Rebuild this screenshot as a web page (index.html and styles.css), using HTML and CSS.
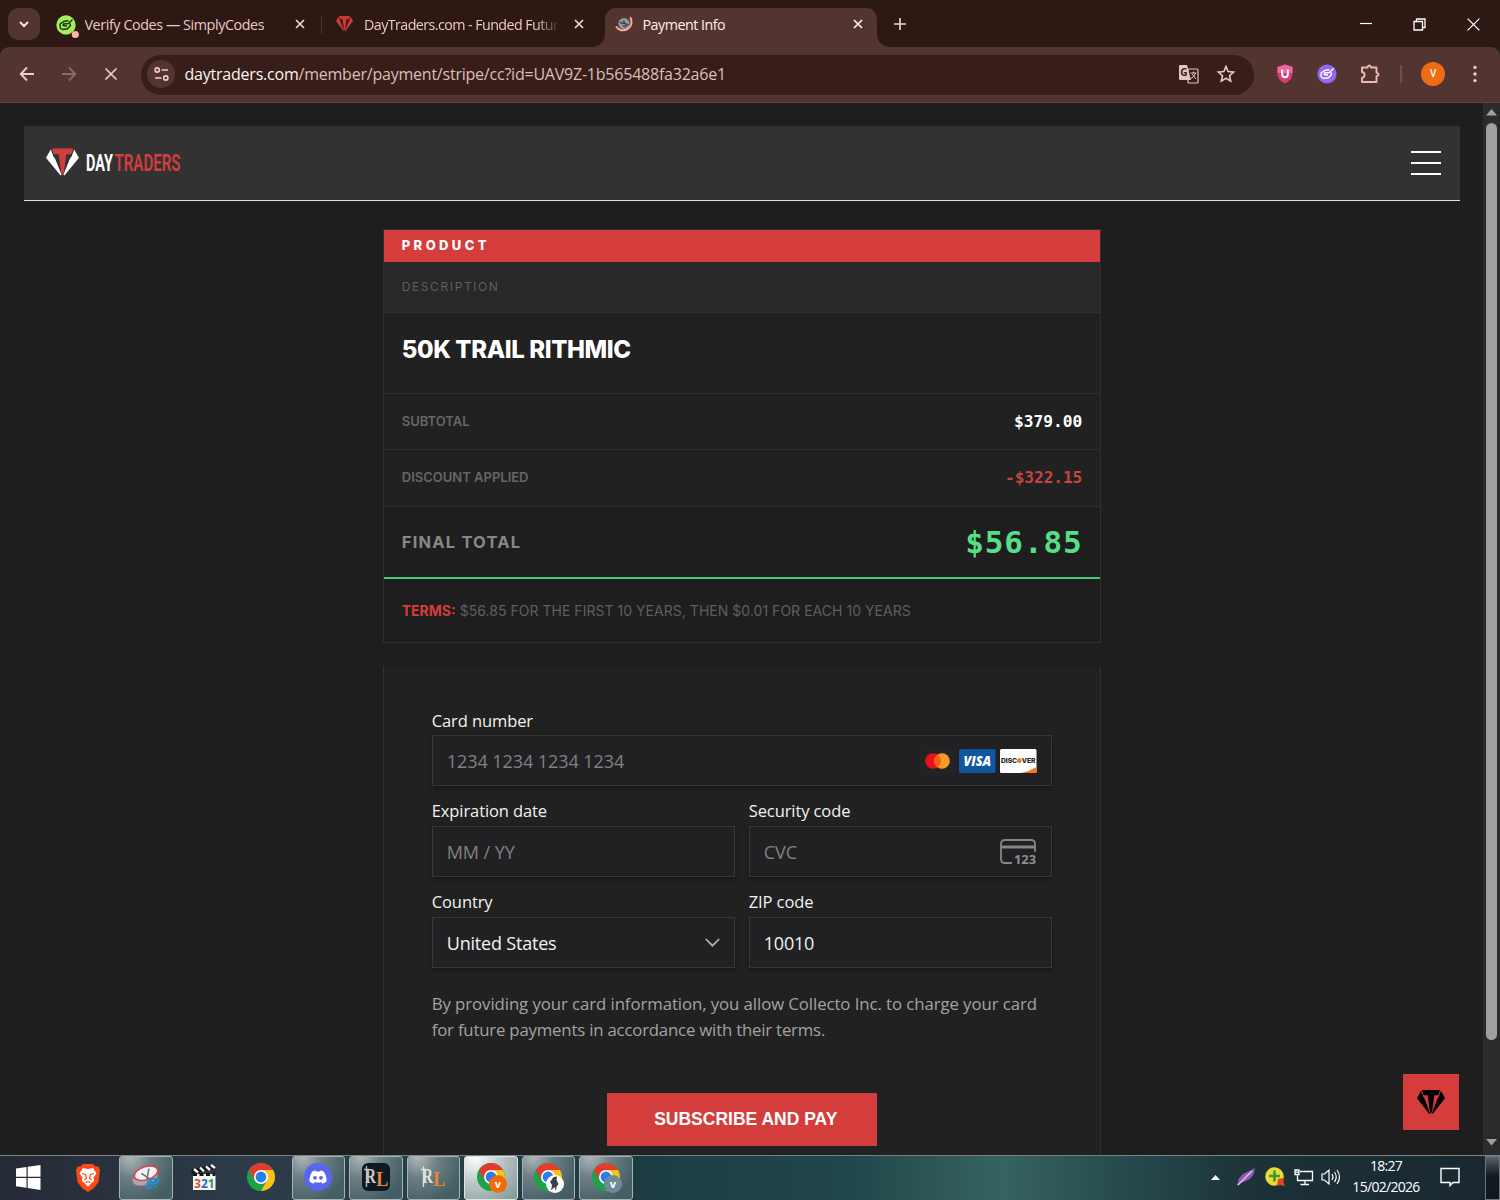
FILE: index.html
```html
<!DOCTYPE html>
<html lang="en">

<head>
  <meta charset="UTF-8">
  <meta name="viewport" content="width=device-width, initial-scale=1.0">
  <title>Payment Info</title>
  <link rel="stylesheet" href="styles.css">
</head>

<body>
  <!-- shared shapes -->
  <svg class="defs" width="0" height="0">
    <defs>
      <symbol id="gem" viewBox="0 0 34 28">
        <path class="gem-side" d="M5 1 L0 9.5 L15 28 L16 27 L9.5 11 L7.5 8 Z M29 1 L34 9.5 L19 28 L18 27 L24.5 11 L26.5 8 Z" />
        <path class="gem-core" d="M6 0 H28 L26 6 H21 L18.5 24 L17 28 L15.5 24 L13 6 H8 Z" />
      </symbol>
      <symbol id="chrome" viewBox="0 0 28 28">
        <circle cx="14" cy="14" r="14" fill="#1fa04b" />
        <path d="M1.9 7 A14 14 0 0 1 26.1 7 L14 7 L8 17.5 Z" fill="#e33b2e" />
        <path d="M26.1 7 A14 14 0 0 1 14 28 L20 17.5 L14 7 Z" fill="#fbc116" />
        <circle cx="14" cy="14" r="7" fill="#fff" />
        <circle cx="14" cy="14" r="5.4" fill="#2b7de9" />
      </symbol>
      <symbol id="tag" viewBox="0 0 20 20">
        <path d="M12.5 5.8 L8.5 6.2 L4 9 L4.2 13 L6.5 14.5 L11.5 13.8 L14.5 10.5 L14 8.5 M16.5 4.5 L12.5 8.5 L7.5 9 L7 10.5 L11 11" fill="none" stroke="currentColor" stroke-width="1.4" stroke-linejoin="round" />
      </symbol>
    </defs>
  </svg>

  <div class="window">
    <div class="tab-strip">
      <button class="tab-search">
        <svg width="12" height="8" viewBox="0 0 12 8"><path d="M2 2 L6 6 L10 2" fill="none" stroke="#ffe4df" stroke-width="2" /></svg>
      </button>
      <div class="tab tab-one">
        <svg class="favicon" width="24" height="24" viewBox="0 0 24 24">
          <circle cx="10" cy="11" r="9.7" fill="#a3ee5d" />
          <use href="#tag" x="0" y="1" width="20" height="20" color="#16340d" />
          <circle cx="19.3" cy="20.5" r="3.6" fill="#ffb3a6" />
        </svg>
        <span class="tab-title">Verify Codes — SimplyCodes</span>
        <svg class="tab-close" width="10" height="10" viewBox="0 0 10 10"><path d="M1 1 L9 9 M9 1 L1 9" stroke="#f6d5cf" stroke-width="1.7" /></svg>
      </div>
      <div class="tab tab-two">
        <svg class="favicon gem-dark" width="17" height="15" viewBox="0 0 34 28" preserveAspectRatio="none"><use href="#gem" width="34" height="28" /></svg>
        <span class="tab-title fade">DayTraders.com - Funded Futures</span>
        <svg class="tab-close" width="10" height="10" viewBox="0 0 10 10"><path d="M1 1 L9 9 M9 1 L1 9" stroke="#f6d5cf" stroke-width="1.7" /></svg>
      </div>
      <div class="tab tab-active">
        <svg class="favicon" width="18" height="18" viewBox="0 0 18 18">
          <circle cx="9" cy="7.5" r="5.6" fill="#8d999e" />
          <path d="M5 6 Q7 8 9.5 7 L8.5 4.5 M9.5 7.5 L12.5 8.5 L10.5 10.5 L8 10" fill="none" stroke="#46464b" stroke-width="1.6" />
          <path d="M15.2 1.2 A8 8 0 1 1 1 10.5" fill="none" stroke="#ffa99f" stroke-width="2" />
        </svg>
        <span class="tab-title">Payment Info</span>
        <svg class="tab-close" width="10" height="10" viewBox="0 0 10 10"><path d="M1 1 L9 9 M9 1 L1 9" stroke="#fff0ed" stroke-width="1.7" /></svg>
      </div>
      <button class="new-tab">
        <svg width="12" height="12" viewBox="0 0 12 12"><path d="M6 0 V12 M0 6 H12" stroke="#f3cdc7" stroke-width="1.7" /></svg>
      </button>
      <div class="window-controls">
        <svg width="12" height="12" viewBox="0 0 12 12"><path d="M0 5.5 H12" stroke="#fff" stroke-width="1.2" /></svg>
        <svg width="13" height="13" viewBox="0 0 13 13"><path d="M1 3.5 H9.5 V12 H1 Z M3.5 3.5 V1 H12 V9.5 H9.5" fill="none" stroke="#fff" stroke-width="1.3" /></svg>
        <svg width="13" height="13" viewBox="0 0 13 13"><path d="M.6 .6 L12.4 12.4 M12.4 .6 L.6 12.4" stroke="#fff" stroke-width="1.3" /></svg>
      </div>
    </div>

    <div class="toolbar">
      <div class="nav-buttons">
        <svg width="16" height="16" viewBox="0 0 16 16"><path d="M15 8 H2 M8 1.5 L1.7 8 L8 14.5" fill="none" stroke="#f3cdc7" stroke-width="1.8" /></svg>
        <svg width="16" height="16" viewBox="0 0 16 16"><path d="M1 8 H14 M8 1.5 L14.3 8 L8 14.5" fill="none" stroke="#8c6a66" stroke-width="1.8" /></svg>
        <svg width="16" height="16" viewBox="0 0 16 16"><path d="M2.5 2.5 L13.5 13.5 M13.5 2.5 L2.5 13.5" stroke="#f3cdc7" stroke-width="1.7" /></svg>
      </div>
      <div class="address-bar">
        <span class="site-info">
          <svg width="15" height="14" viewBox="0 0 15 14"><path d="M7.5 3 H14 M1 11 H7.5" stroke="#f3cdc7" stroke-width="1.6" /><circle cx="3.2" cy="3" r="2.1" fill="none" stroke="#f3cdc7" stroke-width="1.6" /><circle cx="11.8" cy="11" r="2.1" fill="none" stroke="#f3cdc7" stroke-width="1.6" /></svg>
        </span>
        <span class="url"><b>daytraders.com</b>/member/payment/stripe/cc?id=UAV9Z-1b565488fa32a6e1</span>
        <svg class="translate" width="20" height="19" viewBox="0 0 20 19">
          <rect x="9" y="4" width="10" height="14" rx="1" fill="none" stroke="#e5c5c0" stroke-width="1.2" />
          <path d="M1.2 0 H8 L12 15 H1.2 Q0 15 0 13.8 V1.2 Q0 0 1.2 0 Z" fill="#e5c5c0" />
          <path d="M11.5 8 H17.5 M14.5 6.5 V8 M16.5 8 Q15.5 12 12 13.5 M13 9 L17 14" fill="none" stroke="#e5c5c0" />
          <text x="1.2" y="11" class="icon-g">G</text>
        </svg>
        <svg width="18" height="18" viewBox="0 0 18 18"><path d="M9 1.6 L11.2 6.6 L16.6 7.1 L12.5 10.7 L13.7 16.1 L9 13.2 L4.3 16.1 L5.5 10.7 L1.4 7.1 L6.8 6.6 Z" fill="none" stroke="#ecc9c3" stroke-width="1.6" /></svg>
      </div>
      <div class="extensions">
        <svg width="16" height="20" viewBox="0 0 16 20">
          <path d="M8 .5 L15.5 3 V11 Q14.5 16.5 8 19.5 Q1.5 16.5 .5 11 V3 Z" fill="#d63c72" />
          <path d="M8 .5 L15.5 3 V9 H.5 V3 Z" fill="#f0669b" />
          <path d="M5.2 5.5 V10.5 Q5.2 13.2 8 13.2 Q10.8 13.2 10.8 10.5 V5.5" fill="none" stroke="#fff" stroke-width="2" />
        </svg>
        <svg width="20" height="20" viewBox="0 0 20 20"><circle cx="10" cy="10" r="9.6" fill="#9367f3" /><use href="#tag" width="20" height="20" color="#fff" /></svg>
        <svg width="20" height="20" viewBox="0 0 20 20"><path d="M2 3.5 H7.5 Q7.8 1.5 9.2 1.5 Q10.6 1.5 11 3.5 H16.5 V8.8 Q18.5 9.2 18.5 10.5 Q18.5 11.8 16.5 12.2 V18 H2 V14 Q4.6 13.3 4.6 11 Q4.6 8.7 2 8 Z" fill="none" stroke="#efb9b2" stroke-width="1.9" stroke-linejoin="round" /></svg>
        <i class="divider"></i>
        <span class="avatar">V</span>
        <svg width="4" height="18" viewBox="0 0 4 18"><circle cx="2" cy="2.4" r="1.7" fill="#f3cdc7" /><circle cx="2" cy="9" r="1.7" fill="#f3cdc7" /><circle cx="2" cy="15.6" r="1.7" fill="#f3cdc7" /></svg>
      </div>
    </div>

    <div class="viewport">
      <main class="page">
        <header class="site-header">
          <svg class="logo" width="150" height="32" viewBox="0 0 150 32">
            <use href="#gem" x="0" y="1" width="33" height="28" />
            <text x="40" y="24" class="logo-day" textLength="27" lengthAdjust="spacingAndGlyphs">DAY</text>
            <text x="68.5" y="24" class="logo-traders" textLength="66" lengthAdjust="spacingAndGlyphs">TRADERS</text>
          </svg>
          <div class="menu-toggle"><i></i><i></i><i></i></div>
        </header>

        <section class="summary">
          <div class="row row-product">Product</div>
          <div class="row row-description">Description</div>
          <div class="row row-name">50K TRAIL RITHMIC</div>
          <div class="row row-line"><span>Subtotal</span><b>$379.00</b></div>
          <div class="row row-line"><span>Discount applied</span><b class="discount">-$322.15</b></div>
          <div class="row row-total"><span>Final total</span><b>$56.85</b></div>
          <div class="row row-terms"><strong>Terms:</strong>&nbsp;<span>$56.85 for the first 10 years, then $0.01 for each 10 years</span></div>
        </section>

        <form class="payment">
          <div class="field wide">
            <label>Card number</label>
            <div class="input placeholder">
              <span>1234 1234 1234 1234</span>
              <svg class="brands" width="118" height="26" viewBox="0 0 118 26">
                <rect x="2" y="1" width="36" height="24" rx="1.5" fill="#242324" />
                <circle cx="14" cy="13" r="7.8" fill="#e8101c" />
                <circle cx="23" cy="13" r="7.8" fill="#f79a2b" />
                <path d="M18.5 6.6 A7.8 7.8 0 0 1 18.5 19.4 A7.8 7.8 0 0 1 18.5 6.6 Z" fill="#ff5d0e" />
                <rect x="40" y="1" width="36.5" height="24" rx="1.5" fill="#10569f" />
                <text x="44.5" y="17.5" class="visa" textLength="27.5" lengthAdjust="spacingAndGlyphs">VISA</text>
                <rect x="81" y="1" width="36.5" height="24" rx="1.5" fill="#fff" />
                <path d="M117.5 19 V25 H102 Q111 23 117.5 19 Z" fill="#f4791f" />
                <text x="82" y="15" class="discover" textLength="16" lengthAdjust="spacingAndGlyphs">DISC</text>
                <circle cx="100.3" cy="12.7" r="2.4" fill="#f4791f" />
                <text x="102.8" y="15" class="discover" textLength="13.5" lengthAdjust="spacingAndGlyphs">VER</text>
              </svg>
            </div>
          </div>
          <div class="field">
            <label>Expiration date</label>
            <div class="input placeholder"><span>MM / YY</span></div>
          </div>
          <div class="field">
            <label>Security code</label>
            <div class="input placeholder">
              <span>CVC</span>
              <svg width="37" height="26" viewBox="0 0 37 26">
                <path d="M12 24 H5 Q1 24 1 20 V5 Q1 1 5 1 H31 Q35 1 35 5 V13" fill="none" stroke="#858586" stroke-width="1.8" />
                <path d="M1 8 H35" stroke="#858586" stroke-width="3.2" />
                <text x="14" y="24.5" class="cvc-digits" textLength="22" lengthAdjust="spacingAndGlyphs">123</text>
              </svg>
            </div>
          </div>
          <div class="field">
            <label>Country</label>
            <div class="input">
              <span>United States</span>
              <svg width="15" height="9" viewBox="0 0 15 9"><path d="M.8 1 L7.5 7.7 L14.2 1" fill="none" stroke="#b4b4b5" stroke-width="1.7" /></svg>
            </div>
          </div>
          <div class="field">
            <label>ZIP code</label>
            <div class="input"><span>10010</span></div>
          </div>
          <p class="mandate">By providing your card information, you allow Collecto Inc. to charge your card<br><span>for future payments in accordance with their terms.</span></p>
          <button class="submit" type="button">SUBSCRIBE AND PAY</button>
        </form>
      </main>

      <div class="scrollbar">
        <svg width="11" height="7" viewBox="0 0 11 7"><path d="M5.5 0 L11 6.5 H0 Z" fill="#a0a0a0" /></svg>
        <i class="thumb"></i>
        <svg width="11" height="7" viewBox="0 0 11 7"><path d="M5.5 6.5 L11 0 H0 Z" fill="#a0a0a0" /></svg>
      </div>

      <div class="chat-launcher">
        <svg class="gem-black" width="28" height="24" viewBox="0 0 34 28" preserveAspectRatio="none"><use href="#gem" width="34" height="28" /></svg>
      </div>
    </div>
  </div>

  <footer class="taskbar">
    <div class="start">
      <svg width="25" height="25" viewBox="0 0 25 25"><path d="M0 3.5 L10.5 2 V11.8 H0 Z M11.7 1.8 L24.5 0 V11.8 H11.7 Z M0 13 H10.5 V22.8 L0 21.3 Z M11.7 13 H24.5 V25 L11.7 23 Z" fill="#fff" /></svg>
    </div>
    <div class="slot">
      <svg width="24" height="29" viewBox="0 0 24 29">
        <path d="M7 1 H17 L19.5 3.5 L22 3.2 L24 7 L22.5 19 L18 25 L12 29 L6 25 L1.5 19 L0 7 L2 3.2 L4.5 3.5 Z" fill="#fb4a17" />
        <path d="M7 5 L12 6 L17 5 L20.5 10.5 L17.5 14.5 L18 18 L15 20.5 L12 24 L9 20.5 L6 18 L6.5 14.5 L3.5 10.5 Z" fill="#fff" />
        <path d="M6 10.5 L9.5 11.5 L10.5 15 L8.5 17 M18 10.5 L14.5 11.5 L13.5 15 L15.5 17 M9.5 19.5 L12 18.5 L14.5 19.5" fill="none" stroke="#fb4a17" stroke-width="1.2" />
      </svg>
    </div>
    <div class="slot open">
      <svg width="30" height="27" viewBox="0 0 32 27">
        <ellipse cx="15" cy="14" rx="14" ry="7.5" transform="rotate(-18 15 14)" fill="#a6a9ad" stroke="#c06a70" stroke-width=".8" />
        <ellipse cx="16" cy="9" rx="13" ry="7" transform="rotate(-18 16 9)" fill="#f4f4f4" stroke="#d9434b" stroke-width="1.6" />
        <path d="M11 9 L20 15 M19 4 L17 16" stroke="#6b7077" stroke-width="1.6" />
        <ellipse cx="25" cy="17" rx="4.5" ry="2.2" fill="none" stroke="#2589cb" stroke-width="2.2" />
        <ellipse cx="19.5" cy="21.5" rx="2.4" ry="4" transform="rotate(20 19.5 21.5)" fill="none" stroke="#2589cb" stroke-width="2.2" />
        <path d="M22 18 L27 24" stroke="#2589cb" stroke-width="2.2" />
      </svg>
    </div>
    <div class="slot">
      <svg width="25" height="27" viewBox="0 0 25 27">
        <rect x="2" y="10" width="22.5" height="16" fill="#f7f7f5" />
        <path d="M0 5.5 L23 .5 L24 5 L1 10 Z" fill="#161616" />
        <path d="M3 5 L7 8.5 M9 3.5 L13 7.3 M15 2.4 L19 6 M20 1 L24 4" stroke="#f5f5f5" stroke-width="2.4" />
        <path d="M2 10.5 H24.5" stroke="#161616" stroke-width="3" stroke-dasharray="4 2.5" />
        <text x="3" y="24" class="clapper"><tspan fill="#d2562a">3</tspan><tspan fill="#2b6cb5">2</tspan><tspan fill="#3c9440">1</tspan></text>
      </svg>
    </div>
    <div class="slot"><svg width="28" height="28"><use href="#chrome" width="28" height="28" /></svg></div>
    <div class="slot open">
      <svg width="28" height="28" viewBox="0 0 28 28">
        <circle cx="14" cy="14" r="14" fill="#5865f2" />
        <path d="M8.5 8.5 Q11 7.3 11.5 7.6 L12 8.6 H16 L16.5 7.6 Q17 7.3 19.5 8.5 Q23 13 22.5 18.5 Q20.5 20.3 18 20.5 L17 19 Q14 20 11 19 L10 20.5 Q7.5 20.3 5.5 18.5 Q5 13 8.5 8.5 Z" fill="#fff" />
        <circle cx="11" cy="14.8" r="1.9" fill="#5865f2" /><circle cx="17" cy="14.8" r="1.9" fill="#5865f2" />
      </svg>
    </div>
    <div class="slot open">
      <svg width="28" height="28" viewBox="0 0 28 28">
        <rect width="28" height="28" rx="6" fill="#0d1a24" />
        <text x="3" y="20" class="rl" textLength="11" lengthAdjust="spacingAndGlyphs" fill="#c9ccce">R</text>
        <text x="14.2" y="23" class="rl rl-fire" textLength="12" lengthAdjust="spacingAndGlyphs">L</text>
        <path d="M4.5 3 V24 M2 6.5 H7" stroke="#b8bdc0" stroke-width="1.3" />
      </svg>
    </div>
    <div class="slot open">
      <svg width="28" height="28" viewBox="0 0 28 28">
        <text x="3" y="20" class="rl" textLength="11" lengthAdjust="spacingAndGlyphs" fill="#dfe2e2">R</text>
        <text x="14.2" y="23" class="rl rl-fire" textLength="12" lengthAdjust="spacingAndGlyphs">L</text>
        <path d="M4.5 3 V24 M2 6.5 H7" stroke="#dfe2e2" stroke-width="1.3" />
      </svg>
    </div>
    <div class="slot open current">
      <svg class="badged" width="32" height="32" viewBox="0 0 32 32"><use href="#chrome" x="0" y="1" width="28" height="28" /><circle cx="21" cy="22" r="9" fill="#f06c0a" /><text x="21" y="25.5" class="profile">v</text></svg>
    </div>
    <div class="slot open">
      <svg class="badged" width="32" height="32" viewBox="0 0 32 32"><use href="#chrome" x="0" y="1" width="28" height="28" /><circle cx="21" cy="22" r="9" fill="#fff" /><path d="M19.5 15 L23 14.5 L22.5 18 L24.5 22 L22.5 25 L22 29 L20.5 25 L17 28.5 L18 23 L16 20 Z" fill="#3d4246" /></svg>
    </div>
    <div class="slot open">
      <svg class="badged" width="32" height="32" viewBox="0 0 32 32"><use href="#chrome" x="0" y="1" width="28" height="28" /><circle cx="21" cy="22" r="9" fill="#6d8a99" /><text x="21" y="25.5" class="profile">v</text></svg>
    </div>

    <div class="tray">
      <svg width="9" height="5" viewBox="0 0 9 5"><path d="M4.5 0 L9 5 H0 Z" fill="#fff" /></svg>
      <svg class="feather" width="18" height="18" viewBox="0 0 18 18"><path d="M0 18 Q1 8 8 5 L18 0 Q17 10 9 13 L4 15 Z" fill="#9458b8" /><path d="M1 17 L15 3" stroke="#e3c9ee" stroke-width="1.3" /></svg>
      <svg class="plus" width="20" height="20" viewBox="0 0 20 20"><circle cx="9.5" cy="9.5" r="9.3" fill="#eadb34" /><path d="M9.5 3.5 V14.5 M4 9 H15" stroke="#3b9a35" stroke-width="2.6" /><path d="M13 12 L18 11 L19.5 19.5 L16 18 L12 18.5 Z" fill="#e2461f" /></svg>
      <svg class="network" width="20" height="17" viewBox="0 0 20 17"><path d="M6 2.5 H18.5 V11.5 H3.5 V6.5 M11 11.5 V15.5 M6.5 15.5 H15 M1 1 H5 V5.5 H1 Z M1 3.2 H5" fill="none" stroke="#fff" stroke-width="1.3" /></svg>
      <svg class="volume" width="20" height="16" viewBox="0 0 20 16"><path d="M1 5 H3.5 L8 1 V15 L3.5 11 H1 Z M11 5 Q13 8 11 11 M13.5 3 Q17 8 13.5 13 M16 1 Q21 8 16 15" fill="none" stroke="#fff" stroke-width="1.2" /></svg>
      <div class="clock"><span>18:27</span><span class="date">15/02/2026</span></div>
      <svg class="notice" width="20" height="20" viewBox="0 0 20 20"><path d="M1 1.5 H19 V15.5 H13 L10 18.5 V15.5 H1 Z" fill="none" stroke="#fff" stroke-width="1.4" /></svg>
      <i class="show-desktop"></i>
    </div>
  </footer>
</body>

</html>
```
FILE: styles.css
```css
* {
  box-sizing: border-box;
}

:root {
  --ui: "Open Sans", "Noto Sans", sans-serif;
  --inter: Inter, "Liberation Sans", sans-serif;
  --mono: "DejaVu Sans Mono", "Liberation Mono", monospace;
  --red: #d43d3c;
  --line: #303030;
  --gem-side: #fff;
  --gem-core: #d43d3c;
}

body {
  margin: 0;
  width: 1500px;
  height: 1200px;
  overflow: hidden;
  background: #1e1e1e;
  font-family: var(--ui);
  display: flex;
  flex-direction: column;
}

svg {
  display: block;
  flex-shrink: 0;
  overflow: visible;
}

.defs {
  position: absolute;
}

button {
  border: 0;
  padding: 0;
  display: flex;
  align-items: center;
  justify-content: center;
}

.window {
  height: 1155px;
  display: flex;
  flex-direction: column;
}

/* tabs */
.tab-strip {
  height: 47px;
  background: #2e1814;
  display: flex;
  padding: 8px 0 0 8px;
  z-index: 1;
}

.tab-search {
  width: 32px;
  height: 32px;
  border-radius: 10px;
  background: #523430;
}

.tab {
  display: flex;
  align-items: center;
  height: 33px;
  color: #ecc9c3;
  font-size: 14.3px;
  letter-spacing: -0.4px;
  position: relative;
  flex-shrink: 0;
}

.tab-title {
  white-space: nowrap;
  overflow: hidden;
  margin-right: auto;
}

.tab-one {
  width: 282px;
  padding: 0 17px 0 16px;
}

.tab-one .favicon {
  margin: 3px 4.5px 0 0;
}

.tab-one::after {
  content: "";
  position: absolute;
  right: 0;
  top: 7px;
  width: 1px;
  height: 19px;
  background: #52332e;
}

.tab-two {
  width: 283px;
  padding: 0 21px 0 14px;
}

.tab-two .favicon {
  margin: -3px 11px 0 0;
}

.tab-two .tab-title {
  letter-spacing: -0.58px;
}

.fade {
  width: 194px;
  -webkit-mask-image: linear-gradient(90deg, #000 172px, transparent 196px);
  mask-image: linear-gradient(90deg, #000 172px, transparent 196px);
}

.tab-close {
  margin-top: -2px;
}

.gem-side {
  fill: var(--gem-side);
}

.gem-core {
  fill: var(--gem-core);
}

.gem-dark {
  --gem-side: #c93a38;
  --gem-core: #c93a38;
}

.gem-black {
  --gem-side: #000;
  --gem-core: #000;
}

.tab-active {
  width: 272px;
  height: 39px;
  padding: 0 14px 6px 10px;
  background: #523430;
  border-radius: 11px 11px 0 0;
  color: #fff0ed;
}

.tab-active .favicon {
  margin-right: 9.5px;
}

.tab-active .tab-title {
  letter-spacing: -0.5px;
}

.tab-active::before,
.tab-active::after {
  content: "";
  position: absolute;
  bottom: 0;
  width: 12px;
  height: 12px;
}

.tab-active::before {
  left: -12px;
  background: radial-gradient(circle at 0 0, transparent 11.5px, #523430 12px);
}

.tab-active::after {
  right: -12px;
  background: radial-gradient(circle at 100% 0, transparent 11.5px, #523430 12px);
}

.new-tab {
  width: 46px;
  height: 32px;
  background: none;
}

.window-controls {
  margin-left: auto;
  display: flex;
  align-items: center;
  gap: 41px;
  height: 32px;
  padding-right: 20px;
}

/* toolbar */
.toolbar {
  height: 56px;
  background: #523430;
  border-bottom: 1px solid #5c4541;
  border-radius: 9px 9px 0 0;
  box-shadow: 0 -9px 0 -1px #2e1814;
  display: flex;
  align-items: center;
}

.nav-buttons {
  display: flex;
  gap: 26px;
  padding-left: 18.5px;
}

.nav-buttons,
.extensions {
  margin-top: -1px;
}

.address-bar {
  width: 1113px;
  height: 40px;
  margin-left: 22.5px;
  padding: 0 19px 1px 6px;
  border-radius: 20px;
  background: #371e1a;
  display: flex;
  align-items: center;
}

.site-info {
  width: 28px;
  height: 28px;
  border-radius: 50%;
  background: #523430;
  display: flex;
  align-items: center;
  justify-content: center;
}

.url {
  margin: 0 auto 0 9.5px;
  font-size: 16px;
  letter-spacing: -0.22px;
  color: #dcbeb9;
}

.url b {
  font-weight: 400;
  color: #fff2ef;
}

.translate {
  margin-right: 18px;
}

.icon-g {
  font: 700 10px var(--ui);
  fill: #371e1a;
}

.extensions {
  flex: 1;
  display: flex;
  align-items: center;
  padding-left: 23px;
}

.extensions svg {
  margin-right: 24px;
}

.extensions svg:nth-child(2) {
  margin-right: 23px;
}

.extensions svg:nth-child(3) {
  margin-right: 20px;
}

.divider {
  width: 2px;
  height: 18px;
  background: #704d48;
}

.avatar {
  width: 24px;
  height: 24px;
  margin: 0 28px 0 19px;
  border-radius: 50%;
  background: #ee6c13;
  color: #fff;
  font-size: 10px;
  font-weight: 600;
  line-height: 23px;
  text-align: center;
}

.extensions svg:last-child {
  margin-right: 0;
}

/* page */
.viewport {
  flex: 1;
  min-height: 0;
  display: flex;
  position: relative;
}

.page {
  flex: 1;
  height: 1052px;
  overflow: hidden;
  padding: 23px 23.5px 0 24px;
}

.scrollbar {
  width: 17px;
  background: #2b2b2b;
  display: flex;
  flex-direction: column;
  align-items: center;
  padding: 6px 0 9px;
}

.thumb {
  width: 11px;
  height: 917px;
  margin: 7px 0 auto;
  border-radius: 6px;
  background: #9f9f9f;
}

.site-header {
  height: 75px;
  background: #323232;
  border-bottom: 1px solid #e2e2e2;
  display: flex;
  align-items: center;
  justify-content: space-between;
  padding: 0 18.5px 0 22px;
}

.logo-day,
.logo-traders {
  font: 700 23px Roboto, sans-serif;
  fill: #fff;
}

.logo-traders {
  font-weight: 600;
  fill: var(--red);
}

.menu-toggle {
  width: 30px;
  display: grid;
  gap: 9px;
  margin-top: -1px;
}

.menu-toggle i {
  height: 2px;
  background: #fff;
}

.summary {
  width: 718px;
  margin: 28px auto 0;
  border: 1px solid var(--line);
  background: #212121;
  font-family: var(--inter);
  text-transform: uppercase;
}

.row {
  display: flex;
  align-items: center;
  padding: 0 18px;
  border-bottom: 1px solid var(--line);
  color: #666;
}

.row b {
  margin-left: auto;
  font-family: var(--mono);
  color: #fff;
}

.row-product {
  height: 32px;
  padding-bottom: 2px;
  background: var(--red);
  border: 0;
  color: #fff;
  font-size: 13px;
  font-weight: 800;
  letter-spacing: 3.4px;
}

.row-description {
  height: 51px;
  padding-bottom: 1px;
  background: #282828;
  color: #5f5f5f;
  font-size: 12px;
  letter-spacing: 1.6px;
}

.row-name {
  height: 81px;
  padding-bottom: 7px;
  color: #fff;
  font-size: 24px;
  font-weight: 800;
  letter-spacing: -0.4px;
}

.row-line {
  height: 56.3px;
  padding-bottom: 1px;
  font-size: 13px;
  font-weight: 600;
}

.row-line b {
  font-size: 16.2px;
  margin-right: -0.5px;
}

.row-line .discount {
  color: #c94340;
  letter-spacing: -0.1px;
}

.row-total {
  height: 72px;
  background: #1e1e1e;
  border-bottom: 2px solid #4cc67f;
  color: #888;
  font-size: 16.5px;
  font-weight: 700;
  letter-spacing: 1.2px;
}

.row-total b {
  margin-right: -0.7px;
  color: #56df86;
  font-size: 31px;
  letter-spacing: 0.85px;
}

.row-terms {
  height: 63px;
  background: #1e1e1e;
  border: 0;
  color: #5f5f5f;
  font-size: 14px;
  letter-spacing: 0.03px;
}

.row-terms strong {
  color: var(--red);
  letter-spacing: 0;
}

/* payment form */
.payment {
  width: 718px;
  height: 520px;
  margin: 23px auto 0;
  padding: 41px 48px 0;
  background: #212121;
  border: solid var(--line);
  border-width: 0 1px;
  display: grid;
  grid-template-columns: 1fr 1fr;
  grid-auto-rows: max-content;
  column-gap: 14px;
  row-gap: 11px;
}

.wide,
.mandate,
.submit {
  grid-column: 1 / -1;
}

.field label {
  display: block;
  height: 28.7px;
  line-height: 27px;
  color: #f2f2f2;
  font-size: 16.5px;
  font-weight: 500;
  letter-spacing: -0.1px;
}

.input {
  height: 51px;
  padding: 1px 14px 0;
  background: #212124;
  border: 1px solid #383838;
  box-shadow: 0 2px 4px rgba(0, 0, 0, 0.35);
  display: flex;
  align-items: center;
  justify-content: space-between;
  color: #f2f2f2;
  font-size: 18px;
  font-weight: 500;
  letter-spacing: -0.2px;
}

.placeholder {
  color: #808081;
  font-weight: 400;
  letter-spacing: -0.07px;
}

.visa {
  font: italic 800 13.5px var(--ui);
  fill: #fff;
}

.discover {
  font: 800 6.5px var(--inter);
  fill: #222;
}

.cvc-digits {
  font: 700 13px var(--ui);
  fill: #8f8f90;
}

.mandate {
  margin: 12px 0 0;
  color: #a3a3a3;
  font-size: 16.8px;
  line-height: 26px;
  letter-spacing: -0.08px;
  white-space: nowrap;
}

.mandate span {
  letter-spacing: -0.2px;
}

.submit {
  justify-self: center;
  width: 270px;
  height: 53px;
  margin: 39px 0 0 1px;
  padding: 1px 0 0 7px;
  background: var(--red);
  color: #fff;
  font: 700 17.5px "Liberation Sans", sans-serif;
}

.chat-launcher {
  position: absolute;
  right: 41px;
  bottom: 25px;
  width: 56px;
  height: 56px;
  background: var(--red);
  display: flex;
  align-items: center;
  justify-content: center;
}

/* taskbar */
.taskbar {
  height: 45px;
  border-top: 1px solid #76858a;
  background: linear-gradient(90deg, #252b36 0, #2d3b48 250px, #234048 450px, #1c3c42 640px, #20474a 850px, #36635f 1000px, #25494c 1130px, #1c3138 1260px, #1a2630 1500px);
  display: flex;
  color: #fff;
}

.start {
  width: 59.5px;
  padding: 9px 0 0 16px;
}

.slot {
  width: 53.5px;
  margin: 0 2px;
  padding-bottom: 2px;
  display: flex;
  align-items: center;
  justify-content: center;
}

.open {
  border: 1px solid #a9b2b5;
  border-radius: 3px;
  background: radial-gradient(ellipse at 20% 0, #aeb6b9 0, #6d7f84 35%, #435e64 80%);
}

.current {
  border-color: #dfe5e5;
  background: radial-gradient(ellipse at 20% 0, #fff 0, #bcc6c6 45%, #7e9696 100%);
}

.badged {
  margin: 2px 0 0 4px;
}

.clapper {
  font: 700 12px var(--ui);
}

.rl {
  font: 700 21px "Liberation Serif", serif;
}

.rl-fire {
  fill: #f08236;
}

.profile {
  font: 700 11px var(--ui);
  fill: #fff;
  text-anchor: middle;
}

.tray {
  margin-left: auto;
  display: flex;
  align-items: center;
}

.tray > svg {
  margin-bottom: 2px;
}

.feather {
  margin-left: 17px;
}

.plus {
  margin-left: 10px;
}

.network {
  margin-left: 9px;
}

.volume {
  margin-left: 7px;
}

.clock {
  width: 70px;
  margin: -4px 0 0 10px;
  font-size: 14px;
  line-height: 21px;
  letter-spacing: -0.7px;
  text-align: center;
}

.clock span {
  display: block;
}

.date {
  white-space: nowrap;
}

.notice {
  margin-left: 19px;
}

.show-desktop {
  width: 15px;
  height: 44px;
  margin-left: 25px;
  border: 1px solid #6a777c;
  background: linear-gradient(#5a6367, #11181e 45%);
}
```
